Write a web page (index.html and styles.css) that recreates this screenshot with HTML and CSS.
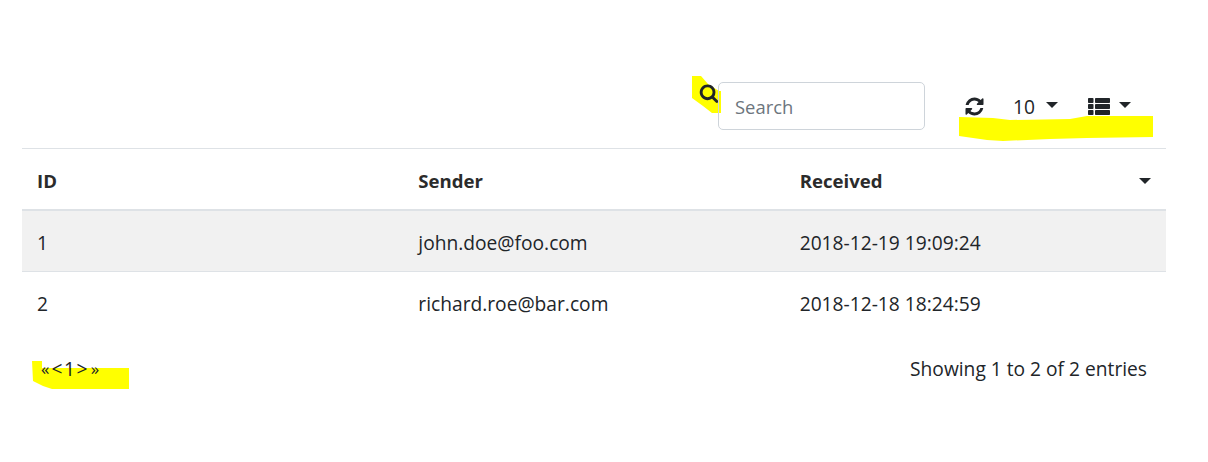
FILE: index.html
```html
<!DOCTYPE html>
<html lang="en">
<head>
    <meta charset="UTF-8">
    <title>Messages</title>
    <link rel="stylesheet" href="styles.css">
</head>
<body>
    <!-- marker scribbles, sit behind the page content -->
    <svg class="marker" width="1208" height="462" viewBox="0 0 1208 462">
        <polygon points="692,76 701,76 708,84 719,91 721,91 721,113 712,113 703,106 692,98"/>
        <polygon points="959,117 993,118 1010,120 1070,119 1087,116 1153,116 1153,137 1087,138 1050,139 1003,141 987,140 959,136"/>
        <polygon points="32,361 42,361 42,368 129,368 129,389 52,389 43,386 33,381"/>
    </svg>

    <div class="page">
        <div class="toolbar">
            <svg class="icon-search" viewBox="0 0 1792 1792"><path d="M1216 832q0-185-131.500-316.500t-316.500-131.500-316.500 131.500-131.500 316.500 131.500 316.500 316.500 131.500 316.500-131.500 131.500-316.500zm512 832q0 52-38 90t-90 38q-54 0-90-38l-343-342q-179 124-399 124-143 0-273.500-55.500t-225-150-150-225-55.500-273.500 55.500-273.500 150-225 225-150 273.500-55.500 273.500 55.500 225 150 150 225 55.500 273.500q0 220-124 399l343 343q37 37 37 90z"/></svg>
            <input class="search" type="text" placeholder="Search">
            <div class="tools">
                <svg class="icon-refresh" viewBox="0 0 1792 1792"><path d="M1639 1056q0 5-1 7-64 268-268 434.500t-478 166.500q-146 0-282.500-55t-243.500-157l-129 129q-19 19-45 19t-45-19-19-45v-448q0-26 19-45t45-19h448q26 0 45 19t19 45-19 45l-137 137q71 66 161 102t187 36q134 0 250-65t186-179q11-17 53-117 8-23 30-23h192q13 0 22.500 9.500t9.500 22.500zm25-800v448q0 26-19 45t-45 19h-448q-26 0-45-19t-19-45 19-45l138-138q-148-137-349-137-134 0-250 65t-186 179q-11 17-53 117-8 23-30 23h-199q-13 0-22.500-9.500t-9.500-22.500v-7q65-268 270-434.500t480-166.500q146 0 284 55.500t245 156.500l130-129q19-19 45-19t45 19 19 45z"/></svg>
                <span class="page-size">10</span>
                <span class="caret"></span>
                <svg class="icon-list" viewBox="0 0 22 17">
                    <rect x="0" y="0" width="5.500" height="5" rx="0.800"/>
                    <rect x="0" y="6" width="5.500" height="5" rx="0.800"/>
                    <rect x="0" y="12" width="5.500" height="5" rx="0.800"/>
                    <rect x="7" y="0" width="15" height="5" rx="0.800"/>
                    <rect x="7" y="6" width="15" height="5" rx="0.800"/>
                    <rect x="7" y="12" width="15" height="5" rx="0.800"/>
                </svg>
                <span class="caret"></span>
            </div>
        </div>

        <table class="grid">
            <thead>
                <tr>
                    <th>ID</th>
                    <th>Sender</th>
                    <th class="sorted">Received<span class="caret"></span></th>
                </tr>
            </thead>
            <tbody>
                <tr class="hover">
                    <td>1</td>
                    <td>john.doe@foo.com</td>
                    <td>2018-12-19 19:09:24</td>
                </tr>
                <tr>
                    <td>2</td>
                    <td>richard.roe@bar.com</td>
                    <td>2018-12-18 18:24:59</td>
                </tr>
            </tbody>
        </table>

        <div class="footer">
            <div class="pager"><span class="small">«</span><span class="step">&lt;1&gt;</span><span class="small">»</span></div>
            <div class="info">Showing 1 to 2 of 2 entries</div>
        </div>
    </div>
</body>
</html>
```

FILE: styles.css
```css
html, body {
    margin: 0;
    height: 462px;
    overflow: hidden;
    background: #fff;
}
body {
    position: relative;
    font-family: "Open Sans", sans-serif;
    font-size: 19.2px;
    color: #212529;
}
.marker {
    position: absolute;
    left: 0;
    top: 0;
}
.marker polygon {
    fill: #ffff00;
}
.page {
    position: relative;
    width: 1144px;
    margin-left: 22px;
    padding-top: 82px;
}
.toolbar {
    display: flex;
    align-items: flex-start;
    height: 66px;
    padding-left: 678px;
    border-bottom: 1px solid #dee2e6;
}
.icon-search {
    width: 20px;
    height: 20px;
    margin: 1px -1px 0 -1px;
    fill: #212529;
}
.search {
    box-sizing: border-box;
    width: 207px;
    height: 48px;
    padding: 1px 16px 0;
    border: 1px solid #ced4da;
    border-radius: 5px;
    background: transparent;
    font-family: inherit;
    font-size: 18.4px;
    color: #212529;
}
.search::placeholder {
    color: #6c757d;
    opacity: 1;
}
.tools {
    display: flex;
    align-items: center;
    height: 48px;
    margin-left: 39px;
}
.icon-refresh {
    width: 21px;
    height: 21px;
    margin-top: 1px;
    fill: #212529;
}
.page-size {
    margin-left: 28px;
}
.caret {
    display: inline-block;
    width: 0;
    height: 0;
    border-top: 6px solid #212529;
    border-left: 6.500px solid transparent;
    border-right: 6.500px solid transparent;
}
.page-size + .caret {
    margin-left: 11px;
    margin-top: -2px;
}
.icon-list {
    width: 22px;
    height: 17px;
    margin-left: 30px;
    fill: #212529;
}
.icon-list + .caret {
    margin-left: 9px;
    margin-top: -2px;
}
.grid {
    width: 100%;
    table-layout: fixed;
    border-collapse: collapse;
}
.grid th,
.grid td {
    height: 61px;
    padding: 3px 15px 0;
    text-align: left;
    box-sizing: border-box;
}
.grid th {
    font-size: 18.6px;
    font-weight: 700;
    color: #2b2b2b;
    border-bottom: 2px solid #dee2e6;
}
.grid td {
    border-bottom: 1px solid #dee2e6;
}
.grid tbody tr:last-child td {
    border-bottom: none;
}
.grid tr.hover td {
    background: #f1f1f1;
}
.sorted {
    position: relative;
}
.sorted .caret {
    position: absolute;
    right: 15px;
    top: 29px;
}
.footer {
    display: flex;
    justify-content: space-between;
    align-items: center;
    margin-top: 23px;
    padding: 0 19px;
}
.pager {
    display: flex;
    align-items: center;
}
.step {
    margin: 0 2px;
    letter-spacing: 1.500px;
}
.small {
    font-size: 17px;
}
```
